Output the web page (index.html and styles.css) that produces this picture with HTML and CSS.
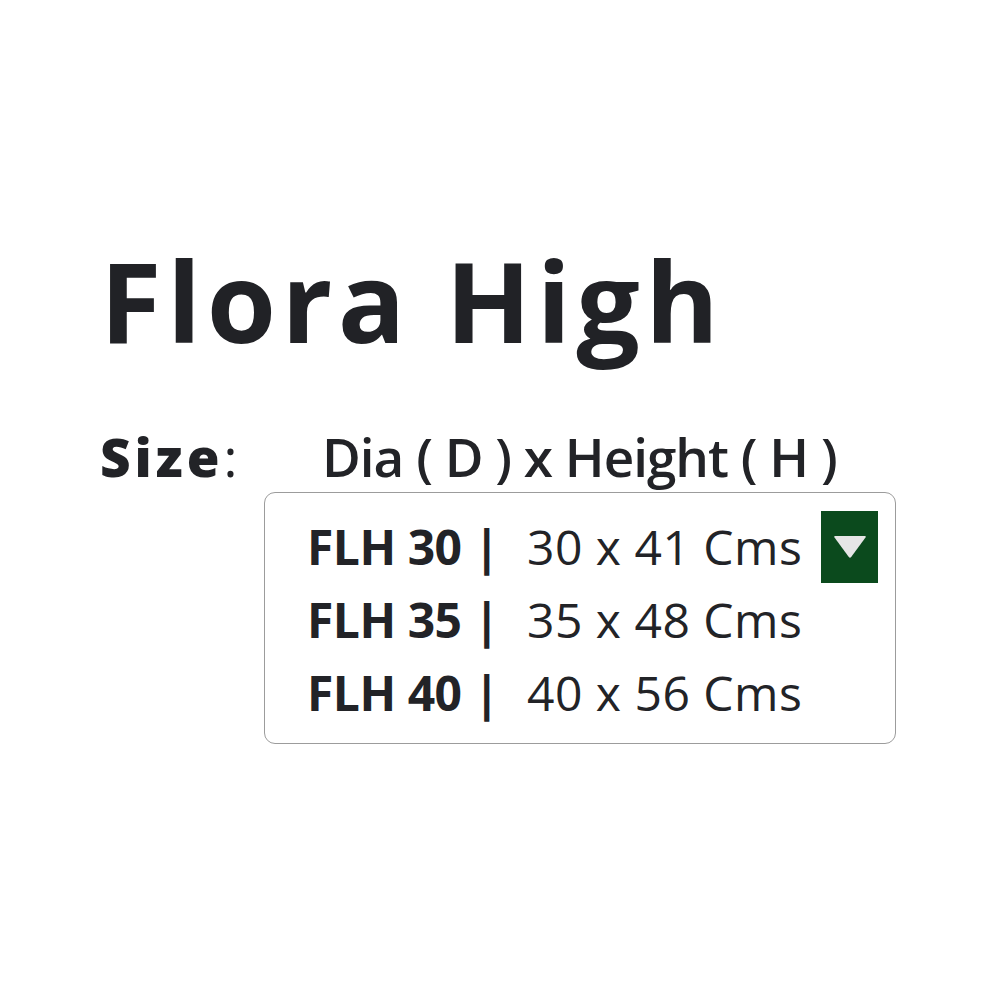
FILE: index.html
```html
<!DOCTYPE html>
<html>
<head>
<meta charset="utf-8">
<link rel="stylesheet" href="styles.css">
</head>
<body>
<main class="page">
  <h1 class="title">Flora High</h1>
  <div class="size-row">
    <span class="size-label"><b>Size</b>:</span>
    <span class="size-dims">Dia ( D ) x Height ( H )</span>
  </div>
  <div class="select">
    <ul class="options">
      <li class="option"><b class="code">FLH 30 |</b><span class="dim">30 x 41 Cms</span></li>
      <li class="option"><b class="code">FLH 35 |</b><span class="dim">35 x 48 Cms</span></li>
      <li class="option"><b class="code">FLH 40 |</b><span class="dim">40 x 56 Cms</span></li>
    </ul>
    <span class="arrow"><svg width="34" height="24" viewBox="0 0 34 24"><path d="M2 1 H32 Q33.5 1 32.5 2.5 L18.2 22 Q17 23.5 15.8 22 L1.5 2.5 Q0.5 1 2 1 Z" fill="#e6e6e6"/></svg></span>
  </div>
</main>
</body>
</html>
```

FILE: styles.css
```css
html, body { margin: 0; padding: 0; background: #fff; }
body { font-family: "Open Sans", "Noto Sans", sans-serif; color: #222327; }
.page { padding: 230px 0 0 100px; width: 900px; box-sizing: border-box; }
.title { margin: 0; font-family: "Open Sans", sans-serif; font-weight: 700; font-size: 112px; line-height: 140px; letter-spacing: 5.5px; color: #212226; }
.size-row { display: flex; align-items: baseline; margin-top: 55px; height: 64px; line-height: 64px; }
.size-label { font-size: 53px; width: 222px; font-weight: 400; }
.size-label b { font-weight: 800; letter-spacing: 4px; }
.size-dims { font-size: 53px; font-weight: 600; letter-spacing: -1px; }
.select { margin: 3px 0 0 164px; width: 632px; height: 252px; box-sizing: border-box; border: 1.5px solid #9c9c9c; border-radius: 11px; display: flex; justify-content: space-between; align-items: flex-start; padding: 16px 17px 0 42px; }
.options { list-style: none; margin: 0; padding: 0; }
.option { display: flex; align-items: baseline; height: 73px; line-height: 76px; font-size: 48px; }
.code { font-weight: 700; width: 220px; letter-spacing: -0.5px; }
.dim { font-weight: 400; letter-spacing: 0.5px; }
.arrow { width: 57px; height: 72px; background: #0b4a1d; display: flex; align-items: center; justify-content: center; margin-top: 2px; }
```
